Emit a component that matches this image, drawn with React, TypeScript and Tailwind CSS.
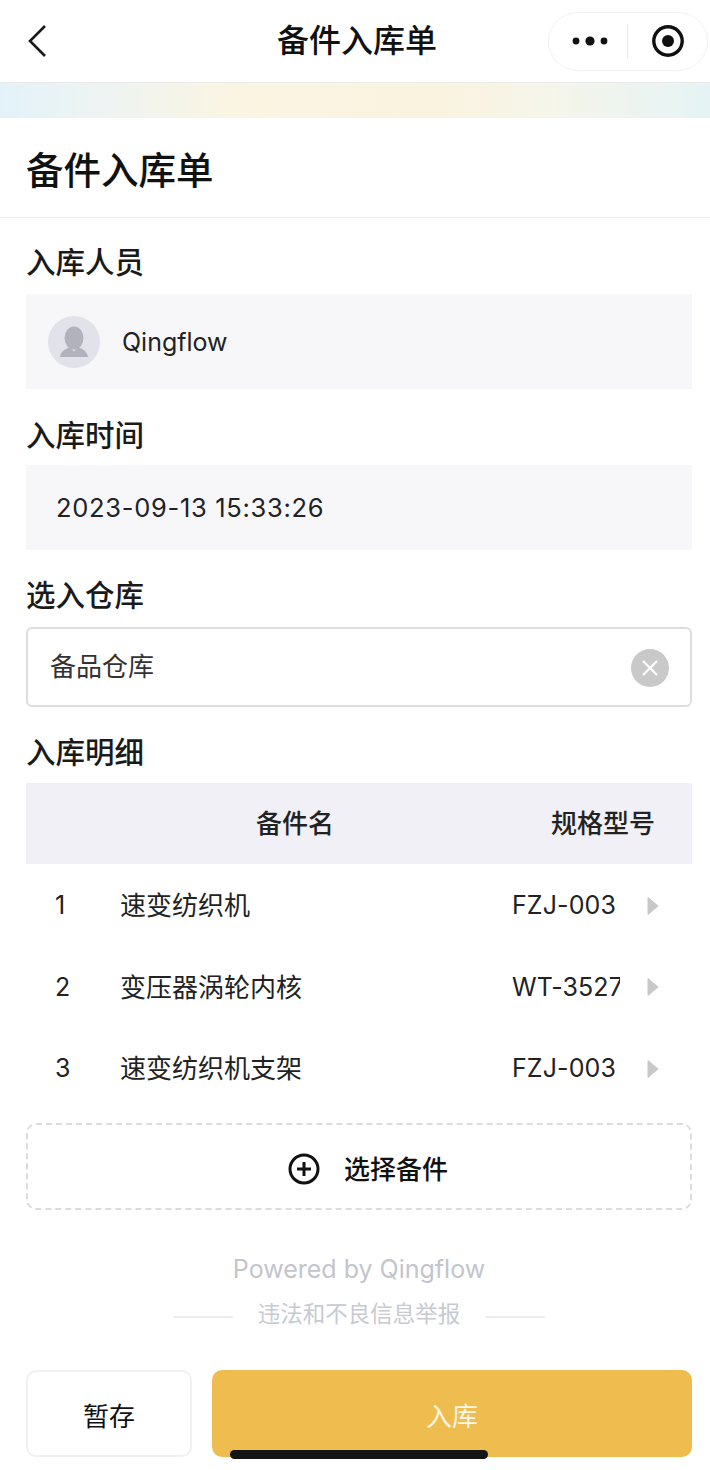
import React from "react";

const FONT = "font-['Inter','Noto_Sans_CJK_SC',sans-serif]";

const ROWS = [
  { no: 1, name: "速变纺织机", model: "FZJ-003" },
  { no: 2, name: "变压器涡轮内核", model: "WT-3527" },
  { no: 3, name: "速变纺织机支架", model: "FZJ-003" },
];

const FieldLabel: React.FC<{ children: React.ReactNode; className?: string }> = ({ children, className }) => (
  <div className={"flex items-center text-[29.5px] leading-none text-[#1a1a1a] font-medium " + (className ?? "")}>
    {children}
  </div>
);

const NavBar = () => (
  <div className="grid grid-cols-[166px_1fr_162px] items-center h-[82px] bg-white border-b border-[#ececec] box-content">
    <div className="pl-[26px] flex items-center">
      <svg width="24" height="34" viewBox="0 0 24 34" fill="none" stroke="#1a1a1a" strokeWidth="2.6">
        <path d="M19 2 L4 17 L19 32" />
      </svg>
    </div>
    <div className="text-center text-[32px] font-medium text-[#111]">备件入库单</div>
    <div className="flex justify-end pr-[2px]">
      <div className="flex items-center w-[160px] h-[59px] rounded-full border border-[#f1f1f1] bg-white">
        <div className="flex-1 flex justify-center pl-[4px]">
          <svg width="36" height="12" viewBox="0 0 36 12" fill="#111">
            <circle cx="4" cy="6" r="3.4" />
            <circle cx="18" cy="6" r="4.6" />
            <circle cx="32" cy="6" r="3.4" />
          </svg>
        </div>
        <div className="w-px h-[34px] bg-[#e8e8e8]" />
        <div className="w-[79px] flex justify-center">
          <svg width="34" height="34" viewBox="0 0 34 34">
            <circle cx="17" cy="17" r="14.2" fill="none" stroke="#111" strokeWidth="3.4" />
            <circle cx="17" cy="17" r="6" fill="#111" />
          </svg>
        </div>
      </div>
    </div>
  </div>
);

const Avatar = () => (
  <div className="w-[52px] h-[52px] rounded-full bg-[#e2e2ea] flex items-center justify-center">
    <svg width="30" height="32" viewBox="0 0 30 32" fill="#b2b2bd">
      <ellipse cx="15" cy="12" rx="9.5" ry="11.5" />
      <path d="M1 31 C2 25 6 23 11 21.5 L15 25.5 L19 21.5 C24 23 28 25 29 31 Z" />
    </svg>
  </div>
);

export default function App() {
  return (
    <div className={"relative w-[710px] h-[1470px] overflow-hidden bg-white " + FONT}>
      <NavBar />
      <div className="h-[35px] bg-[linear-gradient(90deg,#e3f2f9_0%,#eff4f1_16%,#fbf4e2_34%,#faf3e0_62%,#f5f5ea_78%,#e5f3f5_100%)]" />

      <div className="h-[100px] flex items-center pl-[26px] pt-[8px] border-b border-[#ececf0] text-[37.5px] font-medium text-[#111]">
        备件入库单
      </div>

      <div className="pl-[26px] pr-[18px]">
        <FieldLabel className="h-[76px] pt-[14px]">入库人员</FieldLabel>
        <div className="h-[95px] bg-[#f7f7fa] flex items-center pl-[22px] gap-[22px]">
          <Avatar />
          <span className="text-[25px] text-[#222] mt-[2px]">Qingflow</span>
        </div>

        <FieldLabel className="h-[76px] pt-[17px]">入库时间</FieldLabel>
        <div className="h-[85px] bg-[#f7f7fa] flex items-center pl-[30px] pt-[2px] text-[25.5px] tracking-[0.7px] text-[#222]">
          2023-09-13 15:33:26
        </div>

        <FieldLabel className="h-[77px] pt-[15px]">选入仓库</FieldLabel>
        <div className="h-[80px] rounded-[6px] border-2 border-[#dcdce4] flex items-center justify-between pl-[22px] pr-[22px]">
          <span className="text-[26px] text-[#333] mb-[2px]">备品仓库</span>
          <div className="w-[38px] h-[38px] mt-[2px] -mr-[1px] rounded-full bg-[#c9c9c9] flex items-center justify-center">
            <svg width="18" height="18" viewBox="0 0 18 18" stroke="#fff" strokeWidth="2.2">
              <path d="M2 2 L16 16 M16 2 L2 16" />
            </svg>
          </div>
        </div>

        <FieldLabel className="h-[76px] pt-[15px]">入库明细</FieldLabel>
        <div className="grid grid-cols-[474px_192px] h-[81px] items-center bg-[#f0f0f6] text-[26px] font-medium text-[#222]">
          <span className="text-center pl-[64px]">备件名</span>
          <span className="pl-[51px]">规格型号</span>
        </div>
        {ROWS.map((row) => (
          <div key={row.no} className="flex items-center h-[81.5px] text-[#222] text-[25px] pt-[2px]">
            <span className="w-[95px] pl-[29px]">{row.no}</span>
            <span className="w-[391px] text-[26px] -ml-[1px] mr-[1px]">{row.name}</span>
            <span className="w-[108px] overflow-hidden whitespace-nowrap tracking-[0.1px]">{row.model}</span>
            <svg className="ml-[27px]" width="12" height="20" viewBox="0 0 12 20" fill="#c8c8c8" stroke="#c8c8c8" strokeWidth="1" strokeLinejoin="round">
              <path d="M1 1.5 L11 10 L1 18.5 Z" />
            </svg>
          </div>
        ))}

        <div className="mt-[14px] h-[87px] rounded-[10px] border-2 border-dashed border-[#dcdce0] flex items-center justify-center gap-[24px] pl-[18px] pt-[6px]">
          <svg width="32" height="32" viewBox="0 0 32 32" fill="none" stroke="#111" strokeWidth="3">
            <circle cx="16" cy="16" r="14" />
            <path d="M16 9 V23 M9 16 H23" />
          </svg>
          <span className="text-[26px] font-medium text-[#111]">选择备件</span>
        </div>

        <div className="mt-[41px] text-center text-[25px] leading-[36px] text-[#c3c5cd]">Powered by Qingflow</div>
        <div className="mt-[10px] flex items-center justify-center gap-[25px] text-[22.5px] leading-[34px] text-[#c8cad2]">
          <div className="w-[60px] h-[2px] mt-[6px] bg-[#ececf4]" />
          <span>违法和不良信息举报</span>
          <div className="w-[60px] h-[2px] mt-[6px] bg-[#ececf4]" />
        </div>

        <div className="mt-[39px] flex gap-[20px] h-[87px]">
          <div className="w-[166px] rounded-[10px] border-2 border-[#f1f1f3] flex items-center justify-center pt-[6px] text-[26px] text-[#111]">
            暂存
          </div>
          <div className="flex-1 rounded-[10px] bg-[#efbd4f] flex items-center justify-center pt-[6px] text-[26px] text-[#fdf6e6]">
            入库
          </div>
        </div>
      </div>

      {/* home indicator sits on top of the primary button */}
      <div className="absolute left-[230px] top-[1450px] w-[258px] h-[9px] rounded-full bg-[#151515]" />
    </div>
  );
}
